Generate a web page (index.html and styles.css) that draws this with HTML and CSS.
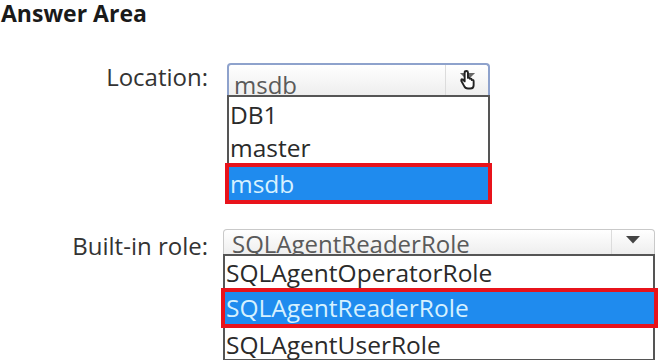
FILE: index.html
```html
<!DOCTYPE html>
<html lang="en">
<head>
    <meta charset="UTF-8">
    <meta name="viewport" content="width=device-width, initial-scale=1.0">
    <title>Answer Area</title>
    <link rel="stylesheet" href="styles.css">
</head>
<body>
    <h2 class="title">Answer Area</h2>

    <div class="field field-location">
        <span class="label">Location:</span>
        <div class="dropdown">
            <div class="combo combo-focus">
                <span class="combo-text">msdb</span>
                <span class="combo-btn">
                    <svg width="17" height="20" viewBox="0 0 18 21">
                        <path d="M1 3 H17 L9 11 Z" fill="#666"/>
                        <path d="M6 2.5 V12 L4 10 Q2 9 2.5 11.5 L5.5 17 Q6.5 19.5 9.5 19.5 L12 19.5 Q15.5 19.5 15.5 16 V12 Q15.5 10 13.5 10.5 Q13.5 8.5 11.5 9.2 Q11.2 7.5 9.5 8.3 V2.5 Q9.5 1 7.8 1 Q6 1 6 2.5 Z" fill="#fff" stroke="#222" stroke-width="2" stroke-linejoin="round"/>
                    </svg>
                </span>
            </div>
            <ul class="list">
                <li>DB1</li>
                <li>master</li>
                <li class="selected">msdb</li>
            </ul>
        </div>
    </div>

    <div class="field field-role">
        <span class="label">Built-in role:</span>
        <div class="dropdown">
            <div class="combo">
                <span class="combo-text">SQLAgentReaderRole</span>
                <span class="combo-btn">
                    <svg width="16" height="9" viewBox="0 0 16 9">
                        <path d="M1 1 H15 L8 8.5 Z" fill="#444"/>
                    </svg>
                </span>
            </div>
            <ul class="list">
                <li>SQLAgentOperatorRole</li>
                <li class="selected">SQLAgentReaderRole</li>
                <li>SQLAgentUserRole</li>
            </ul>
        </div>
    </div>
</body>
</html>
```

FILE: styles.css
```css
* {
    box-sizing: border-box;
    margin: 0;
    padding: 0;
}

body {
    background-color: #fff;
    font-family: "Open Sans", "Noto Sans", Arial, sans-serif;
    color: #2a2a2a;
    width: 659px;
    height: 360px;
    overflow: hidden;
}

.title {
    font-size: 23px;
    font-weight: bold;
    color: #1a1a1a;
    line-height: 26px;
    padding-left: 1px;
}

.field {
    display: grid;
    grid-template-columns: 208px auto;
    align-items: start;
}

.label {
    text-align: right;
    font-size: 24px;
    color: #333;
    line-height: 28px;
    white-space: nowrap;
}

.field-location {
    margin-top: 37px;
}

.field-location .dropdown {
    margin-left: 19px;
    width: 263px;
}

.field-role {
    margin-top: 25px;
}

.field-role .label {
    padding-top: 3px;
}

.field-role .dropdown {
    margin-left: 15px;
    width: 432px;
}

.combo {
    display: flex;
    height: 32px;
    border: 1px solid #c9c9c9;
    border-bottom: none;
    border-radius: 4px 4px 0 0;
    background: linear-gradient(#ffffff, #eeeeee);
    overflow: hidden;
}

.combo-focus {
    border-color: #8ea2cc;
    border-width: 2px 2px 0 2px;
}

.combo-text {
    flex: 1;
    padding: 5px 0 0 5px;
    font-size: 24px;
    line-height: 30px;
    color: #5a5a5a;
    white-space: nowrap;
}

.combo-btn {
    display: flex;
    align-items: center;
    justify-content: center;
    width: 43px;
    border-left: 1px solid #dcdcdc;
}

.field-role .combo {
    height: 25px;
}

.field-role .combo-text {
    padding-top: 0;
    padding-left: 8px;
    line-height: 27px;
}

.field-role .combo-btn {
    align-items: flex-start;
    padding-top: 5px;
}

.list {
    list-style: none;
    border: 2px solid #555;
    border-bottom: none;
    background-color: #fff;
}

.list li {
    font-size: 24.5px;
    white-space: nowrap;
    padding-left: 1px;
}

.field-location .list li {
    height: 33px;
    line-height: 33px;
    padding-top: 1px;
}

.list li.selected {
    margin: 0 -4px;
    padding-left: 1px;
    border: 4px solid #e8131b;
    background-color: #1f8bee;
    color: #d6f1ff;
}

.field-location .list li.selected {
    height: 41px;
    padding-top: 0;
}

.field-role .list li {
    height: 32px;
    line-height: 32px;
    padding-top: 1px;
}

.field-role .list li.selected {
    height: 40px;
    line-height: 32px;
    padding-top: 0;
    margin: 0 -5px 0 -4px;
}

.field-role .list li:last-child {
    height: 33px;
    border-bottom: 2px solid #555;
}
```
